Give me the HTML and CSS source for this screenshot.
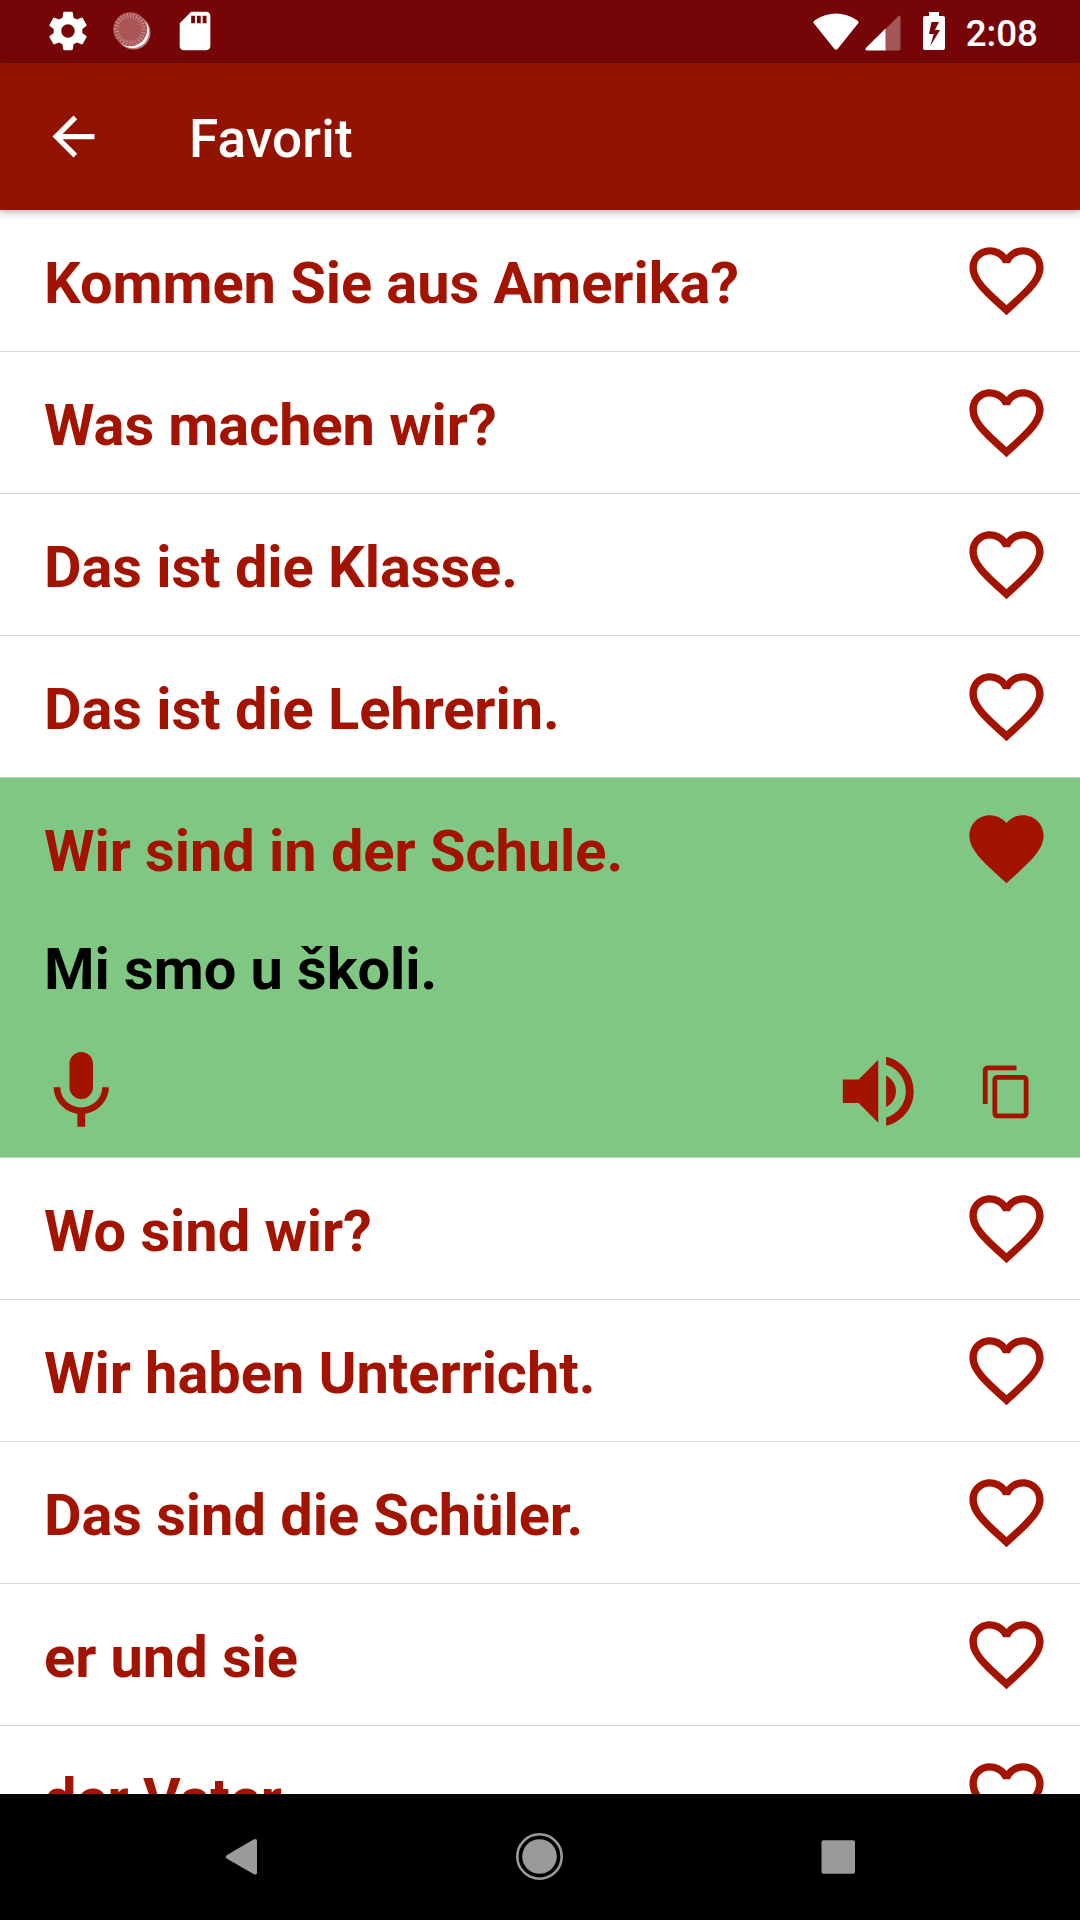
FILE: index.html
```html
<!DOCTYPE html>
<html lang="de">
<head>
    <meta charset="UTF-8">
    <title>Favorit</title>
    <link rel="stylesheet" href="styles.css">
</head>
<body>
    <svg class="sprite">
        <symbol id="heart" viewBox="0 0 24 24"><path d="M16.5 3c-1.74 0-3.41.81-4.5 2.09C10.91 3.81 9.24 3 7.5 3 4.42 3 2 5.42 2 8.5c0 3.78 3.4 6.86 8.55 11.54L12 21.35l1.45-1.32C18.6 15.36 22 12.28 22 8.5 22 5.42 19.58 3 16.5 3zm-4.4 15.55l-.1.1-.1-.1C7.14 14.24 4 11.39 4 8.5 4 6.5 5.5 5 7.5 5c1.54 0 3.04.99 3.57 2.36h1.87C13.46 5.99 14.96 5 16.5 5c2 0 3.5 1.5 3.5 3.5 0 2.89-3.14 5.74-7.9 10.05z"/></symbol>
    </svg>

    <div class="statusbar">
        <div class="notifications">
            <svg class="gear" viewBox="0 0 24 24"><path d="M19.43 12.98c.04-.32.07-.64.07-.98s-.03-.66-.07-.98l2.11-1.65c.19-.15.24-.42.12-.64l-2-3.46c-.12-.22-.39-.3-.61-.22l-2.49 1c-.52-.4-1.08-.73-1.69-.98l-.38-2.65C14.46 2.18 14.25 2 14 2h-4c-.25 0-.46.18-.49.42l-.38 2.65c-.61.25-1.17.59-1.69.98l-2.49-1c-.23-.09-.49 0-.61.22l-2 3.46c-.13.22-.07.49.12.64l2.11 1.65c-.04.32-.07.65-.07.98s.03.66.07.98l-2.11 1.65c-.19.15-.24.42-.12.64l2 3.46c.12.22.39.3.61.22l2.49-1c.52.4 1.08.73 1.69.98l.38 2.65c.03.24.24.42.49.42h4c.25 0 .46-.18.49-.42l.38-2.65c.61-.25 1.17-.59 1.69-.98l2.49 1c.23.09.49 0 .61-.22l2-3.46c.12-.22.07-.49-.12-.64l-2.11-1.65zM12 15.5c-1.93 0-3.5-1.57-3.5-3.5s1.57-3.5 3.5-3.5 3.5 1.57 3.5 3.5-1.57 3.5-3.5 3.5z"/></svg>
            <svg class="dial" viewBox="0 0 38 38">
                <circle class="dial-rim" cx="20.5" cy="20.5" r="17"/>
                <circle class="dial-edge" cx="19.5" cy="19.5" r="16.5"/>
                <circle class="dial-face" cx="17.2" cy="17.2" r="17"/>
                <circle class="dial-ticks" cx="17.2" cy="17.2" r="13.8" pathLength="84"/>
            </svg>
            <svg class="sdcard" viewBox="0 0 24 24"><path d="M18 2h-8L4.02 8 4 20c0 1.1.9 2 2 2h12c1.1 0 2-.9 2-2V4c0-1.1-.9-2-2-2zm-6 6h-2V4h2v4zm3 0h-2V4h2v4zm3 0h-2V4h2v4z"/></svg>
        </div>
        <div class="system">
            <svg class="wifi" viewBox="0 0 46 38"><path d="M1.2 10.8C-.2 9.5.4 8.4 2 7.2 15-1.6 31-1.6 44 7.2c1.6 1.2 2.2 2.3.8 3.6L25 35.6c-1.4 1.6-2.6 1.6-4 0z"/></svg>
            <svg class="signal" viewBox="0 0 36 36"><path class="signal-off" d="M20 35.5H33.5Q35.5 35.5 35.5 33.5V2C35.5.5 34.5 0 33.2 1.2L20 14.5z"/><path d="M20.5 13.5V35.5H2C.3 35.5 0 34 1.2 32.8z"/></svg>
            <svg class="battery" viewBox="0 0 22 38"><path d="M6 0h10v4h4q2 0 2 2v30q0 2-2 2H2q-2 0-2-2V6q0-2 2-2h4zM8.5 10 6 22h4.7L7.3 34 17 18h-5l4-8z"/></svg>
            <span class="clock">2:08</span>
        </div>
    </div>

    <div class="toolbar">
        <svg class="back" viewBox="0 0 24 24"><path d="M20 11H7.83l5.59-5.59L12 4l-8 8 8 8 1.41-1.41L7.83 13H20v-2z"/></svg>
        <span class="title">Favorit</span>
    </div>

    <ul class="list">
        <li><span>Kommen Sie aus Amerika?</span><svg class="heart"><use href="#heart"/></svg></li>
        <li><span>Was machen wir?</span><svg class="heart"><use href="#heart"/></svg></li>
        <li><span>Das ist die Klasse.</span><svg class="heart"><use href="#heart"/></svg></li>
        <li class="last"><span>Das ist die Lehrerin.</span><svg class="heart"><use href="#heart"/></svg></li>
        <li class="open">
            <div class="phrase">
                <span>Wir sind in der Schule.</span>
                <svg class="heart" viewBox="0 0 24 24"><path d="M12 21.35l-1.45-1.32C5.4 15.36 2 12.28 2 8.5 2 5.42 4.42 3 7.5 3c1.74 0 3.41.81 4.5 2.09C13.09 3.81 14.76 3 16.5 3 19.58 3 22 5.42 22 8.5c0 3.78-3.4 6.86-8.55 11.54L12 21.35z"/></svg>
            </div>
            <div class="translation">Mi smo u školi.</div>
            <div class="actions">
                <svg class="mic" viewBox="0 0 24 24"><path d="M12 14c1.66 0 2.99-1.34 2.99-3L15 5c0-1.66-1.34-3-3-3S9 3.34 9 5v6c0 1.66 1.34 3 3 3zm5.3-3c0 3-2.54 5.1-5.3 5.1S6.7 14 6.7 11H5c0 3.41 2.72 6.23 6 6.72V21h2v-3.28c3.28-.48 6-3.3 6-6.72h-1.7z"/></svg>
                <svg class="speaker" viewBox="0 0 24 24"><path d="M3 9v6h4l5 5V4L7 9H3zm13.5 3c0-1.77-1.02-3.29-2.5-4.03v8.05c1.48-.73 2.5-2.25 2.5-4.02zM14 3.23v2.06c2.89.86 5 3.54 5 6.71s-2.11 5.85-5 6.71v2.06c4.01-.91 7-4.49 7-8.77s-2.99-7.86-7-8.77z"/></svg>
                <svg class="copy" viewBox="0 0 24 24"><path d="M16 1H4c-1.1 0-2 .9-2 2v14h2V3h12V1zm3 4H8c-1.1 0-2 .9-2 2v14c0 1.1.9 2 2 2h11c1.1 0 2-.9 2-2V7c0-1.1-.9-2-2-2zm0 16H8V7h11v14z"/></svg>
            </div>
        </li>
        <li><span>Wo sind wir?</span><svg class="heart"><use href="#heart"/></svg></li>
        <li><span>Wir haben Unterricht.</span><svg class="heart"><use href="#heart"/></svg></li>
        <li><span>Das sind die Schüler.</span><svg class="heart"><use href="#heart"/></svg></li>
        <li><span>er und sie</span><svg class="heart"><use href="#heart"/></svg></li>
        <li><span>der Vater</span><svg class="heart"><use href="#heart"/></svg></li>
    </ul>

    <div class="navbar">
        <svg viewBox="0 0 48 48"><path d="M10 22 36.5 6.5Q40 4.800 40 8V39.500Q40 42.800 36.500 41L10 25.800Q7.500 24 10 22z"/></svg>
        <svg viewBox="0 0 48 48"><circle cx="23.500" cy="23.500" r="17.300"/><circle class="ring" cx="23.500" cy="23.500" r="22.200"/></svg>
        <svg viewBox="0 0 48 48"><rect x="6.500" y="7.300" width="33.500" height="33.400" rx="2"/></svg>
    </div>
</body>
</html>
```
FILE: styles.css
```css
* {
    box-sizing: border-box;
}

body, html {
    margin: 0;
    padding: 0;
    height: 1920px;
    font-family: Roboto, sans-serif;
}
body{
    display: flex;
    flex-direction:column;
    width: 1080px;
    overflow: hidden;
    background: #fff;
}
svg{
    display: block;
    flex: none;
}
.sprite{
    display: none;
}

/* status bar */
.statusbar{
    flex: none;
    display: flex;
    justify-content: space-between;
    height: 63px;
    padding: 0 42px 0 45px;
    background: #760507;
    color: #fff;
    fill: #fff;
}
.notifications, .system{
    display: flex;
    align-items: center;
}
.notifications{
    padding-bottom: 1px;
}
.gear, .sdcard{
    width: 46px;
    height: 46px;
}
.dial{
    width: 38px;
    height: 38px;
    margin: 0 21px 0 22px;
}
.dial-rim{
    fill: #b98081;
}
.dial-edge{
    fill: #fff;
}
.dial-face{
    fill: #aa5556;
}
.dial-ticks{
    fill: none;
    stroke: #c99091;
    stroke-width: 5;
    stroke-dasharray: 1 2;
}
.wifi{
    width: 46px;
    height: 38px;
    margin-right: 6px;
}
.signal{
    width: 36px;
    height: 36px;
    margin: 2px 22px 0 0;
}
.signal-off{
    fill: #a35658;
}
.battery{
    width: 22px;
    height: 38px;
    fill-rule: evenodd;
    margin: 0 21px 1px 0;
}
.clock{
    font-size: 36.75px;
    font-weight: 500;
    line-height: 63px;
    padding-top: 3px;
}

/* toolbar */
.toolbar{
    flex: none;
    display: flex;
    align-items: center;
    height: 147px;
    padding-left: 42px;
    background: #921300;
    color: #fff;
    fill: #fff;
    box-shadow: 0 2px 8px rgba(30,30,50,0.35);
    z-index: 1;
}
.back{
    width: 63px;
    height: 63px;
    margin-right: 84px;
}
.title{
    font-size: 53px;
    font-weight: 500;
    letter-spacing: 0.2px;
    padding-top: 4px;
}

/* phrases */
.list{
    flex: 1;
    min-height: 0;
    overflow: hidden;
    list-style: none;
    margin: 0;
    padding: 0;
    font-size: 57.75px;
    font-weight: bold;
    letter-spacing: -0.05px;
    color: #a31400;
    fill: #a31400;
}
.list li{
    display: flex;
    justify-content: space-between;
    height: 142px;
    padding: 26px 29px 0 44px;
    border-bottom: 1px solid #d8d8d8;
}
.list li.last{
    border-color: #b4d9b6;
}
.list span, .translation{
    line-height: 94px;
}
.heart{
    width: 89px;
    height: 89px;
}
.list li.open{
    flex-direction: column;
    justify-content: flex-start;
    height: 380px;
    background: #81c784;
    border-color: #b4d9b6;
}
.phrase{
    display: flex;
    justify-content: space-between;
    height: 118px;
}
.translation{
    height: 122px;
    color: #000;
}
.actions{
    display: flex;
}
.mic{
    width: 94.5px;
    height: 94.5px;
    margin-left: -10.5px;
}
.speaker{
    width: 94.5px;
    height: 94.5px;
    margin-left: auto;
}
.copy{
    width: 57.75px;
    height: 57.75px;
    margin: 18.5px 15px 0 53px;
}

/* navigation bar */
.navbar{
    flex: none;
    display: flex;
    justify-content: center;
    align-items: center;
    gap: 251px;
    height: 126px;
    background: #000;
    fill: #9a9a9a;
}
.navbar svg{
    width: 48px;
    height: 48px;
}
.ring{
    fill: none;
    stroke: #9a9a9a;
    stroke-width: 2.6;
}
```
